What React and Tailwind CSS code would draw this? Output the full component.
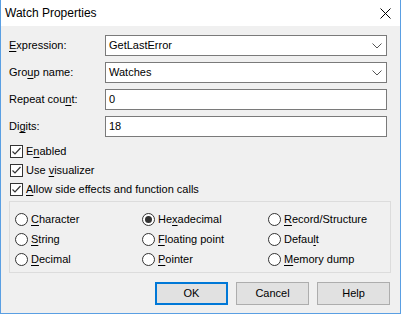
import React from "react";

const font = { fontFamily: '"Liberation Sans", Arial, sans-serif' };

// Label text with one underlined access-key letter
const Key = ({ text, k }) => {
  const i = k ?? 0;
  return (
    <span>
      {text.slice(0, i)}
      <span className="underline underline-offset-[2px]">{text[i]}</span>
      {text.slice(i + 1)}
    </span>
  );
};

const Chevron = () => (
  <svg width="10" height="6" viewBox="0 0 10 6" className="shrink-0">
    <path d="M0.5 0.5 L5 5 L9.5 0.5" fill="none" stroke="#555" strokeWidth="1" />
  </svg>
);

const Field = ({ label, k, value, combo }) => (
  <div className="flex items-center h-[21px]">
    <div className="w-[96px] shrink-0">
      <Key text={label} k={k} />
    </div>
    <div className="flex items-center w-[282px] h-[21px] bg-white border border-[#7a7a7a] pl-[3px] pr-[4px]">
      <span className="flex-1">{value}</span>
      {combo && <Chevron />}
    </div>
  </div>
);

const Check = ({ label, k }) => (
  <div className="flex items-center h-[19px] pl-[9px]">
    <div className="w-[13px] h-[13px] bg-white border border-[#333] flex items-center justify-center">
      <svg width="11" height="11" viewBox="0 0 11 11">
        <path d="M1.5 5.5 L4 8 L9.5 2" fill="none" stroke="#333" strokeWidth="1.2" />
      </svg>
    </div>
    <span className="ml-[3px]">
      <Key text={label} k={k} />
    </span>
  </div>
);

const Radio = ({ label, k, checked }) => (
  <div className="flex items-center h-[20px]">
    <div className="w-[13px] h-[13px] rounded-full bg-white border border-[#333] flex items-center justify-center">
      {checked && <div className="w-[7px] h-[7px] rounded-full bg-[#333]" />}
    </div>
    <span className="ml-[3px]">
      <Key text={label} k={k} />
    </span>
  </div>
);

const Button = ({ children, primary }) => (
  <button
    className={
      primary
        ? "w-[73px] h-[23px] bg-[#e1e1e1] border-2 border-[#0078d7] flex items-center justify-center"
        : "w-[73px] h-[23px] bg-[#e1e1e1] border border-[#adadad] flex items-center justify-center"
    }
  >
    {children}
  </button>
);

export default function App() {
  return (
    <div
      style={font}
      className="w-[401px] h-[314px] flex flex-col border-x border-b border-[#5a9fe3] text-[11px] text-black leading-none bg-[#f0f0f0]"
    >
      {/* Title bar */}
      <div className="h-[26px] bg-white flex items-center justify-between pl-[4px] pr-[9px] shrink-0 text-[12px]">
        <span>Watch Properties</span>
        <svg width="11" height="11" viewBox="0 0 11 11">
          <path d="M0.5 0.5 L10.5 10.5 M10.5 0.5 L0.5 10.5" stroke="#000" strokeWidth="1" />
        </svg>
      </div>

      {/* Body */}
      <div className="flex-1 flex flex-col pt-[9px] pl-[8px]">
        <div className="flex flex-col gap-[6px]">
          <Field label="Expression:" k={0} value="GetLastError" combo />
          <Field label="Group name:" k={3} value="Watches" combo />
          <Field label="Repeat count:" k={10} value="0" />
          <Field label="Digits:" k={2} value="18" />
        </div>

        <div className="flex flex-col mt-[5px] -ml-[8px]">
          <Check label="Enabled" k={1} />
          <Check label="Use visualizer" k={4} />
          <Check label="Allow side effects and function calls" k={0} />
        </div>

        <div className="mt-[2px] w-[382px] h-[72px] border border-[#dcdcdc] pt-[7px] pl-[5px] grid grid-cols-[127px_126px_1fr] content-start">
          <Radio label="Character" k={0} />
          <Radio label="Hexadecimal" k={2} checked />
          <Radio label="Record/Structure" k={0} />
          <Radio label="String" k={0} />
          <Radio label="Floating point" k={0} />
          <Radio label="Default" k={5} />
          <Radio label="Decimal" k={0} />
          <Radio label="Pointer" k={0} />
          <Radio label="Memory dump" k={0} />
        </div>

        <div className="flex justify-end gap-[8px] mt-[9px] pr-[10px]">
          <Button primary>OK</Button>
          <Button>Cancel</Button>
          <Button>Help</Button>
        </div>
      </div>
    </div>
  );
}
